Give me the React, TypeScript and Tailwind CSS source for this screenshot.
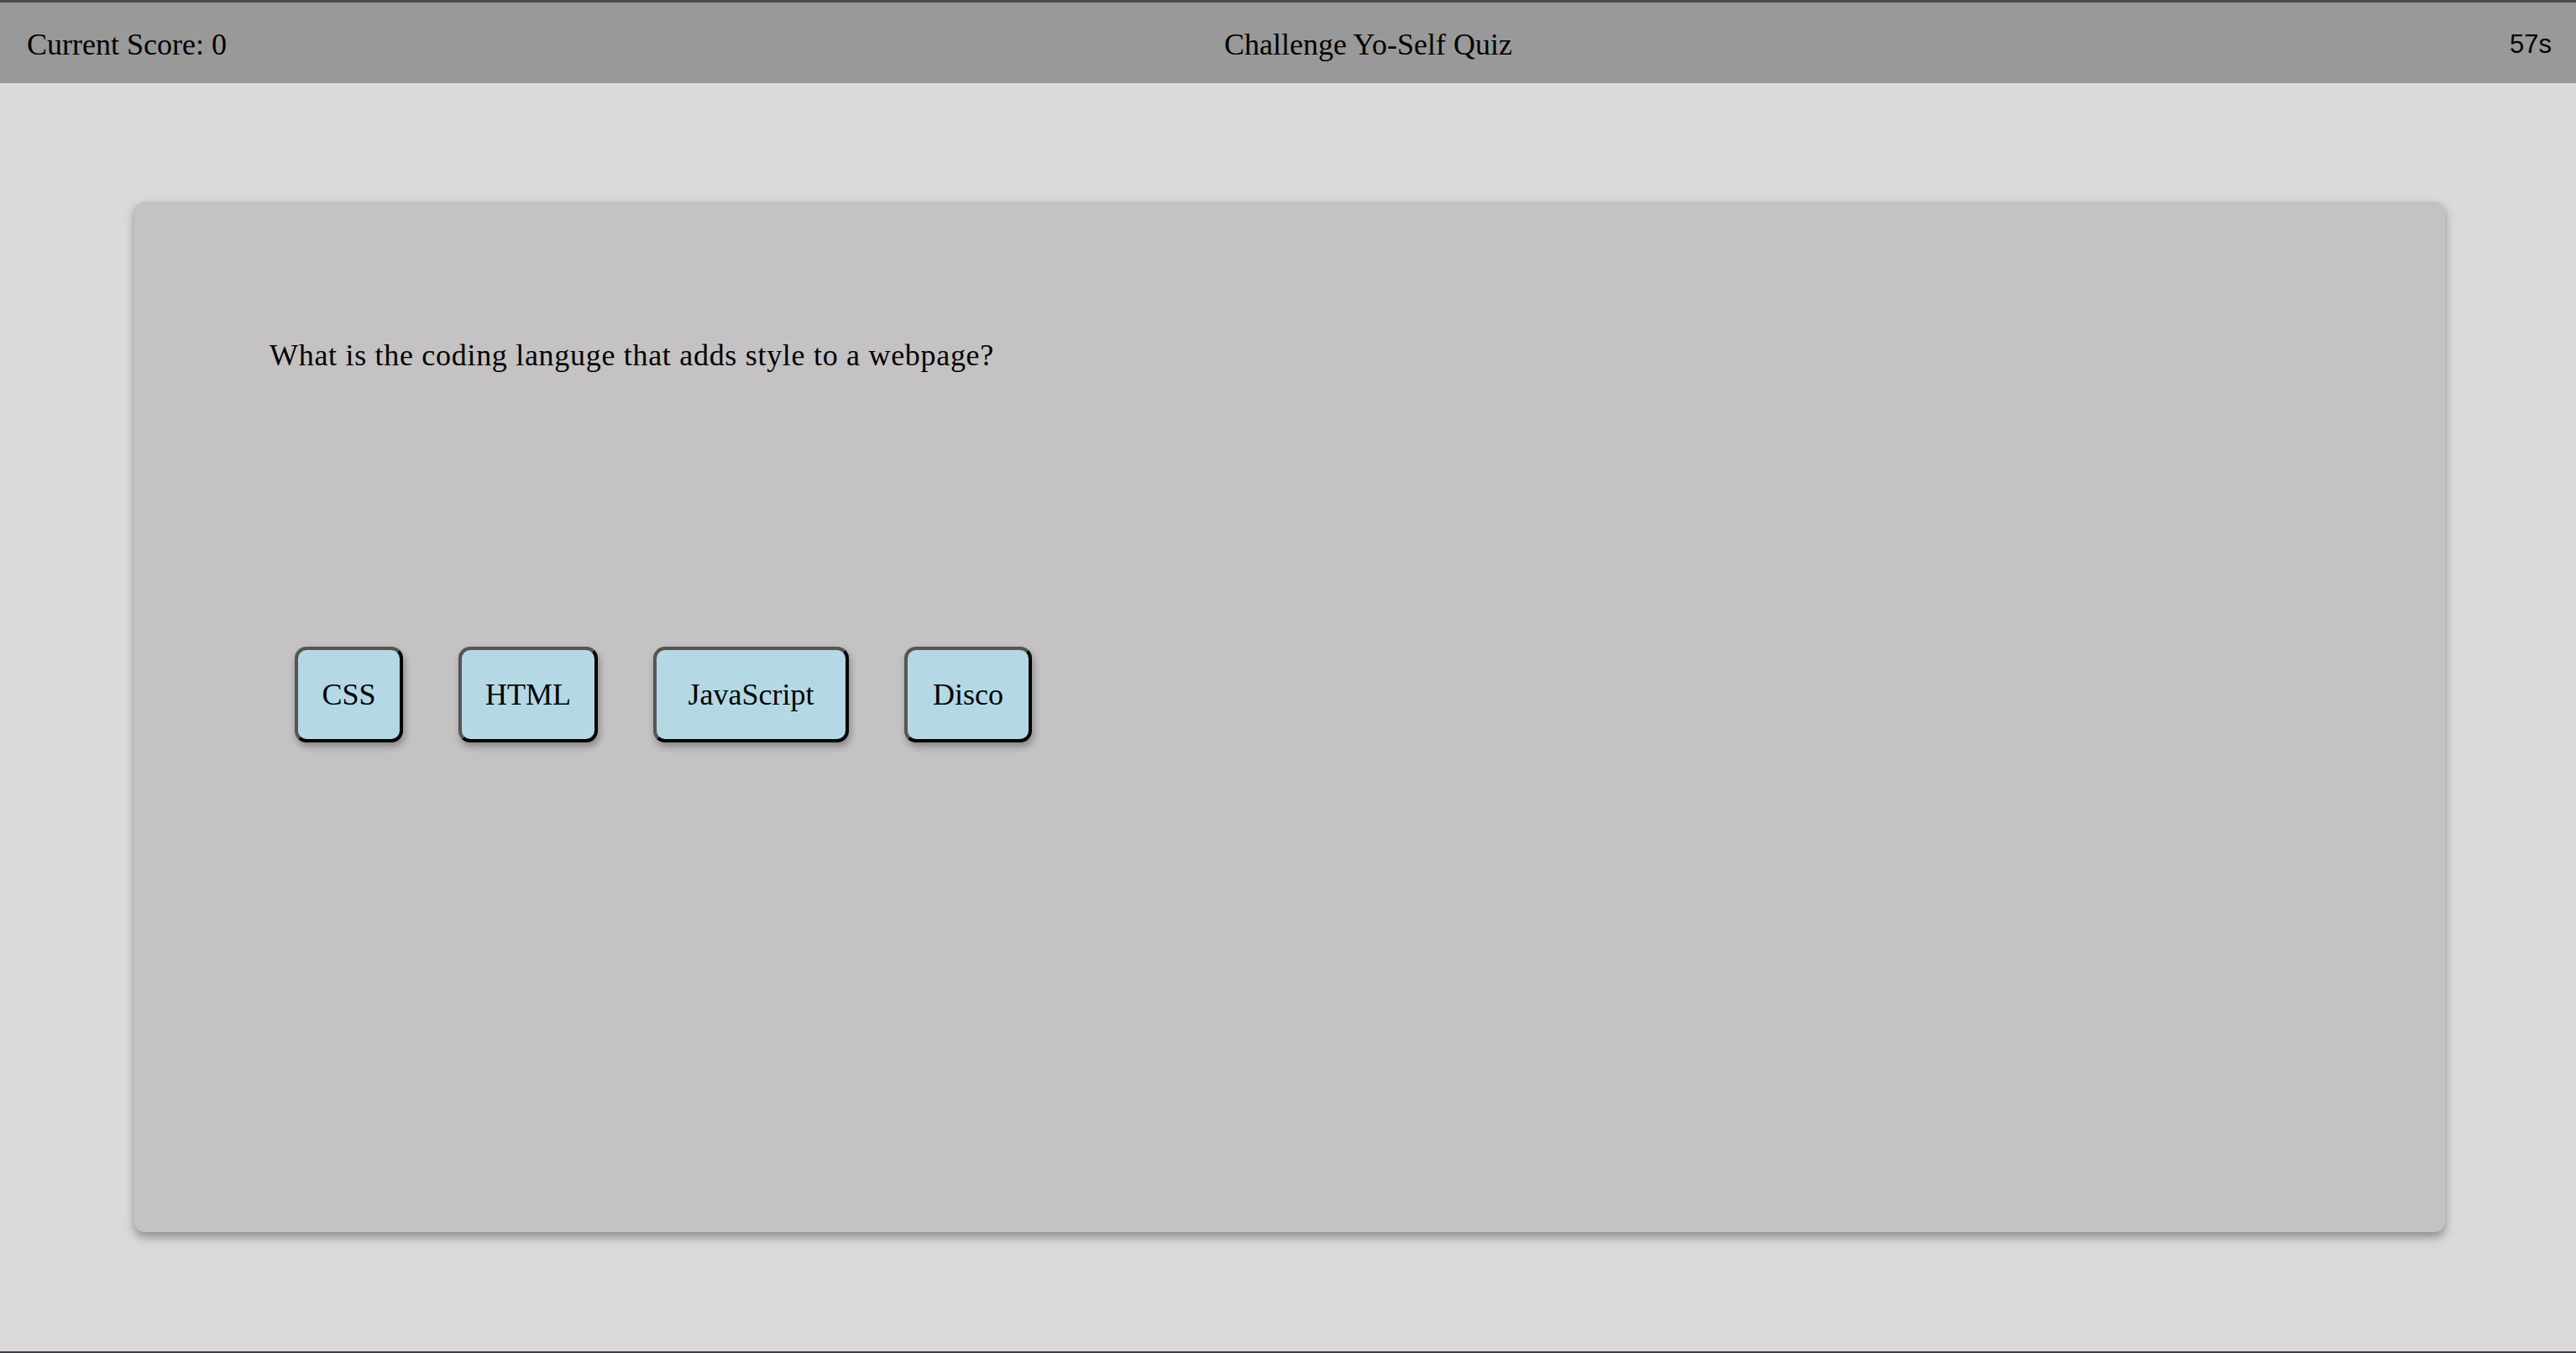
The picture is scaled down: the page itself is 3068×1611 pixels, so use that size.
const answers = [
  { label: 'CSS', width: 'w-[129px]' },
  { label: 'HTML', width: 'w-[166px]' },
  { label: 'JavaScript', width: 'w-[233px]' },
  { label: 'Disco', width: 'w-[152px]' },
];

function Header() {
  return (
    <header className="flex h-[96px] items-center justify-between bg-[#999999] pl-[32px] pr-[29px] pt-[3px] text-black">
      <div className="text-[36px] leading-[42px]">Current Score: 0</div>
      <div className="text-[36px] leading-[42px]">Challenge Yo-Self Quiz</div>
      <div className="font-['Liberation_Sans',Arial,sans-serif] text-[31px] leading-[42px]">57s</div>
    </header>
  );
}

function AnswerButton({ label, width }: { label: string; width: string }) {
  return (
    <button
      type="button"
      className={`${width} rounded-[14px] border-[4px] border-t-[#555555] border-l-[#555555] border-r-black border-b-black bg-[#b4d8e4] py-[32px] text-center text-[36px] leading-[42px] text-black shadow-[2px_5px_8px_rgba(0,0,0,0.3)]`}
    >
      {label}
    </button>
  );
}

export default function App() {
  return (
    <div className="flex h-[1611px] flex-col border-t-[3px] border-b-[2px] border-t-[#4b4b51] border-b-[#3c3e44] bg-[#dbd9da] font-['Liberation_Serif','Times_New_Roman',serif]">
      <Header />
      <main className="ml-[160px] mt-[141px] h-[1227px] w-[2752px] rounded-[12px] bg-[#c4c2c3] shadow-[0_6px_12px_rgba(0,0,0,0.35)]">
        <p className="pl-[161px] pt-[162px] text-[36px] leading-[42px] tracking-[0.7px] text-black">
          What is the coding languge that adds style to a webpage?
        </p>
        <div className="mt-[326px] flex gap-[66px] pl-[191px]">
          {answers.map((a) => (
            <AnswerButton key={a.label} label={a.label} width={a.width} />
          ))}
        </div>
      </main>
    </div>
  );
}
